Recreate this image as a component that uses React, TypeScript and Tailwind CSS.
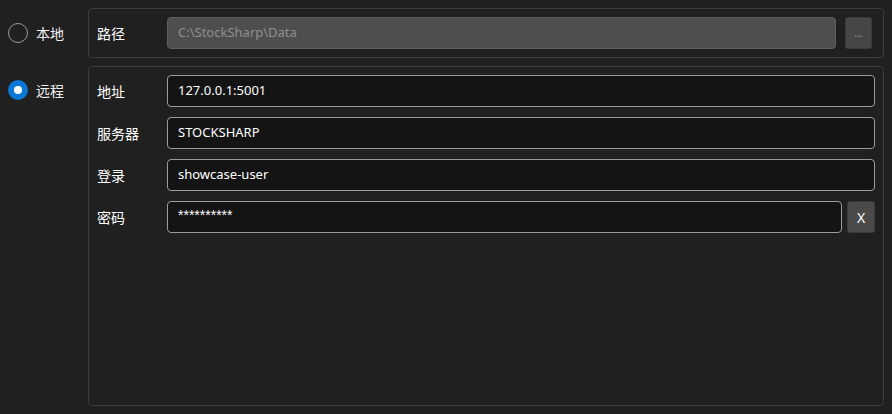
import React from "react";

const font = {
  fontFamily: '"Noto Sans", "Noto Sans CJK SC", sans-serif',
};

function Radio({ label, checked }: { label: string; checked?: boolean }) {
  return (
    <label className="flex h-[20px] items-center gap-[8px] text-[14px] text-[#f0f0f0]">
      {checked ? (
        <span className="flex h-[20px] w-[20px] items-center justify-center rounded-full bg-[#0a78d4]">
          <span className="h-[8px] w-[8px] rounded-full bg-white" />
        </span>
      ) : (
        <span className="h-[20px] w-[20px] rounded-full border border-[#9a9a9a]" />
      )}
      {label}
    </label>
  );
}

function Field({
  label,
  value,
  secret,
  extra,
}: {
  label: string;
  value: string;
  secret?: boolean;
  extra?: React.ReactNode;
}) {
  return (
    <div className="flex h-[32px] items-center">
      <span className="w-[70px] shrink-0 text-[14px] text-white">{label}</span>
      <div className="flex h-full flex-1 items-center rounded-[4px] border border-[#9c9c9c] bg-[#141414] px-[10px] text-[13px] text-white">
        {secret ? (
          <span className="-mt-[3px] font-['Liberation_Sans',sans-serif] text-[14px]">
            {value}
          </span>
        ) : (
          value
        )}
      </div>
      {extra}
    </div>
  );
}

export default function App() {
  return (
    <div
      className="flex h-[414px] w-[892px] bg-[#202020] p-[8px]"
      style={font}
    >
      {/* storage kind */}
      <div className="flex w-[80px] shrink-0 flex-col">
        <div className="flex h-[50px] items-center">
          <Radio label="本地" />
        </div>
        <div className="mt-[22px] flex h-[20px] items-center">
          <Radio label="远程" checked />
        </div>
      </div>

      <div className="flex flex-1 flex-col gap-[8px]">
        {/* local path */}
        <div className="flex h-[50px] items-center rounded-[4px] border border-[#3c3c3c] pl-[8px] pr-[11px]">
          <span className="w-[70px] shrink-0 text-[14px] text-white">路径</span>
          <div className="flex h-[32px] flex-1 items-center rounded-[4px] border border-[#5e5e5e] bg-[#4e4e4e] px-[10px] text-[13px] text-[#8e8e8e]">
            C:\StockSharp\Data
          </div>
          <button
            type="button"
            className="ml-[9px] flex h-[32px] w-[27px] items-end justify-center rounded-[3px] border border-[#3a3a3a] bg-[#464646] pb-[10px] text-[10px] leading-none text-[#a0a0a0]"
          >
            ...
          </button>
        </div>

        {/* remote server */}
        <div className="flex flex-1 flex-col gap-[10px] rounded-[4px] border border-[#3c3c3c] px-[8px] pt-[8px]">
          <Field label="地址" value="127.0.0.1:5001" />
          <Field label="服务器" value="STOCKSHARP" />
          <Field label="登录" value="showcase-user" />
          <Field
            label="密码"
            value="**********"
            secret
            extra={
              <button
                type="button"
                className="ml-[5px] flex h-[32px] w-[28px] shrink-0 items-center justify-center rounded-[3px] border border-[#3a3a3a] bg-[#4a4a4a] text-[14px] text-white"
              >
                X
              </button>
            }
          />
        </div>
      </div>
    </div>
  );
}
